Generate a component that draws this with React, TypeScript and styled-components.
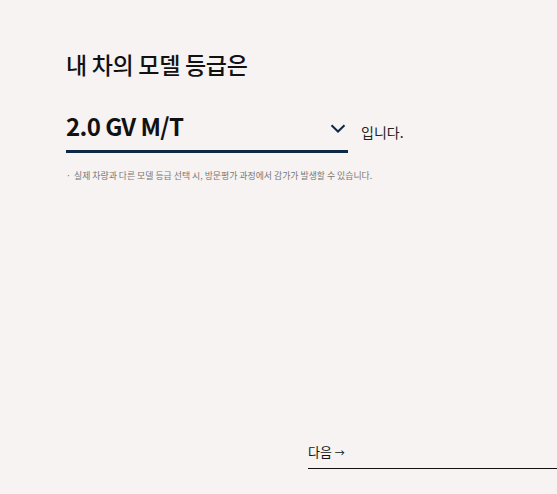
import styled, { createGlobalStyle } from 'styled-components';

const GlobalStyle = createGlobalStyle`
  html, body {
    margin: 0;
    padding: 0;
    background-color: #f6f3f2;
  }

  body {
    font-family: 'Noto Sans CJK KR', 'Noto Sans', sans-serif;
    color: #111;
  }
`;

const ChevronDown = () => (
  <svg width="16" height="9" viewBox="0 0 16 9" fill="none">
    <path d="M1.5 1.2L8 7.5L14.5 1.2" stroke="#0f2846" strokeWidth="2" />
  </svg>
);

const App = () => {
  return (
    <>
      <GlobalStyle />
      <Page>
        <Content>
          <Title>내 차의 모델 등급은</Title>
          <SelectRow>
            <GradeSelect type="button">
              <GradeValue>2.0 GV M/T</GradeValue>
              <ChevronDown />
            </GradeSelect>
            <Suffix>입니다.</Suffix>
          </SelectRow>
          <Notice>
            <li>실제 차량과 다른 모델 등급 선택 시, 방문평가 과정에서 감가가 발생할 수 있습니다.</li>
          </Notice>
        </Content>
        <Footer>
          <NextButton type="button">
            다음 <Arrow>→</Arrow>
          </NextButton>
        </Footer>
      </Page>
    </>
  );
};

const Page = styled.div`
  display: flex;
  flex-direction: column;
  min-height: 494px;
  box-sizing: border-box;
  padding-top: 48px;
`;

const Content = styled.section`
  padding-left: 66px;
`;

const Title = styled.h2`
  margin: 0;
  font-size: 23px;
  font-weight: 500;
  line-height: 32px;
  letter-spacing: -0.3px;
`;

const SelectRow = styled.div`
  display: flex;
  align-items: flex-end;
  gap: 13px;
  margin-top: 27px;
`;

const GradeSelect = styled.button`
  display: flex;
  align-items: center;
  justify-content: space-between;
  width: 282px;
  height: 46px;
  padding: 0 2px 6px 0;
  box-sizing: border-box;
  border: none;
  border-bottom: 3px solid #0f2846;
  background: transparent;
  color: #111;
  font-family: inherit;
  cursor: pointer;

  svg {
    margin-top: 6px;
  }
`;

const GradeValue = styled.span`
  font-size: 24px;
  font-weight: 700;
  letter-spacing: -0.6px;
`;

const Suffix = styled.span`
  margin-bottom: 11px;
  font-size: 14px;
  line-height: 20px;
  color: #222;
`;

const Notice = styled.ul`
  margin: 16px 0 0;
  padding: 0;
  list-style: none;

  li {
    position: relative;
    padding-left: 8px;
    font-size: 8.9px;
    line-height: 14px;
    color: #777;
  }

  li::before {
    content: '·';
    position: absolute;
    left: 0;
  }
`;

const Footer = styled.footer`
  margin-top: auto;
  margin-bottom: 25px;
  align-self: flex-end;
  width: 249px;
`;

const NextButton = styled.button`
  display: block;
  width: 100%;
  padding: 3px 0 5px;
  border: none;
  border-bottom: 1px solid #111;
  background: transparent;
  color: #111;
  font-family: inherit;
  font-size: 13px;
  line-height: 20px;
  text-align: left;
  cursor: pointer;
`;

const Arrow = styled.span`
  font-size: 10px;
`;

export default App;
